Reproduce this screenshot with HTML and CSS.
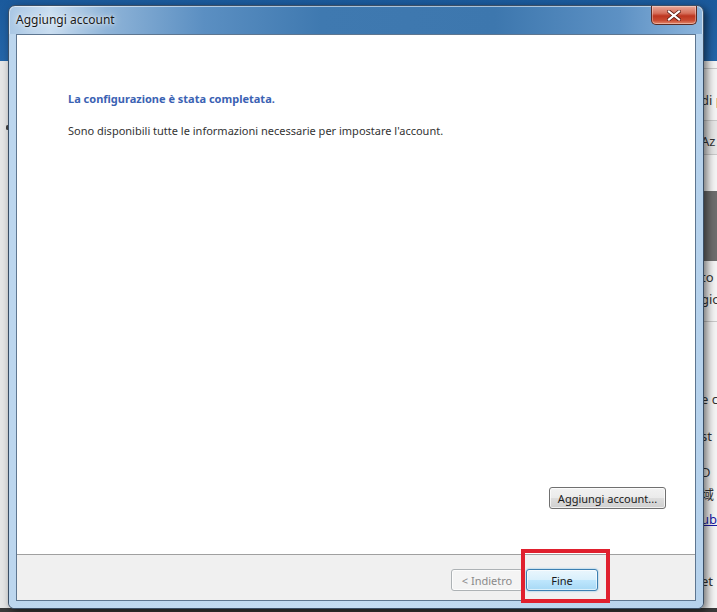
FILE: index.html
```html
<!DOCTYPE html>
<html lang="it">
<head>
    <meta charset="UTF-8">
    <title>Aggiungi account</title>
    <link rel="stylesheet" href="styles.css">
</head>
<body>

    <!-- applicazione dietro la finestra -->
    <div class="desktop">
        <div class="app-band"></div>
        <div class="app-body">
            <div class="app-left"><span class="dot"></span></div>
            <div class="app-right">
                <div class="r1">di p</div>
                <div class="r2">Az</div>
                <div class="r3">i</div>
                <div class="dark-block"></div>
                <div class="r4">to</div>
                <div class="r5">gio</div>
                <div class="row r6">e c</div>
                <div class="row r7">st</div>
                <div class="row r8">D</div>
                <div class="row r9 cjk">域</div>
                <div class="row r10 link">ub</div>
                <div class="row r11">et</div>
            </div>
        </div>
        <div class="taskbar"></div>
    </div>

    <!-- finestra di dialogo -->
    <div class="window">
        <div class="titlebar">
            <span class="title">Aggiungi account</span>
            <div class="close-btn">
                <svg width="14" height="11" viewBox="0 0 14 11">
                    <path d="M2 1.5 L12 9.5 M12 1.5 L2 9.5" stroke="#5a1a12" stroke-width="3.6" stroke-linecap="square"/>
                    <path d="M2 1.5 L12 9.5 M12 1.5 L2 9.5" stroke="#fff" stroke-width="2.2" stroke-linecap="square"/>
                </svg>
            </div>
        </div>
        <div class="client">
            <div class="content">
                <div class="heading">La configurazione è stata completata.</div>
                <div class="text">Sono disponibili tutte le informazioni necessarie per impostare l'account.</div>
                <div class="spacer"></div>
                <div class="add-row">
                    <button class="btn">Aggiungi account...</button>
                </div>
            </div>
            <div class="footer">
                <button class="btn disabled">&lt; Indietro</button>
                <button class="btn default">Fine</button>
            </div>
        </div>
    </div>

    <!-- evidenziazione rossa -->
    <div class="highlight"></div>

</body>
</html>
```

FILE: styles.css
```css
body {
    margin: 0;
    width: 717px;
    height: 612px;
    overflow: hidden;
    position: relative;
    font-family: "Noto Sans", "Liberation Sans", sans-serif;
    font-size: 12px;
}

/* applicazione sullo sfondo */
.desktop {
    width: 100%;
    height: 100%;
    display: flex;
    flex-direction: column;
    background-color: #ececec;
}

.app-band {
    height: 61px;
    background: linear-gradient(#1b5a9c, #2465a8);
    flex: none;
}

.app-body {
    flex: 1;
    display: flex;
    justify-content: space-between;
}

.app-left {
    width: 10px;
    background-color: #e6e6e6;
}

.dot {
    display: block;
    width: 3px;
    height: 5px;
    margin-top: 64px;
    margin-left: 6px;
    background-color: #444;
    border-radius: 2px;
}

.app-right {
    width: 16px;
    padding-left: 2px;
    padding-top: 7px;
    display: flex;
    flex-direction: column;
    color: #333;
    font-size: 13px;
    background-color: #f4f4f4;
    white-space: nowrap;
    overflow: hidden;
}

.r1 {
    border-top: 1px solid #c8c8c8;
    height: 51px;
    line-height: 62px;
}

.r2 {
    border-top: 1px solid #c8c8c8;
    border-bottom: 1px solid #c8c8c8;
    height: 33px;
    line-height: 40px;
    margin-left: -2px;
    padding-left: 2px;
    background-color: #e6e6e6;
}

.r3 {
    height: 36px;
    line-height: 38px;
}

.dark-block {
    height: 70px;
    margin-left: -2px;
    background-color: #6d6d6d;
}

.r4 {
    height: 28px;
    line-height: 32px;
}

.r5 {
    height: 32px;
    line-height: 20px;
    border-bottom: 1px solid #c8c8c8;
}

.row {
    height: 20px;
    line-height: 20px;
}

.r6 { margin-top: 67px; }
.r7 { margin-top: 17px; }
.r8 { margin-top: 16px; }
.r9 { margin-top: 2px; }
.r10 { margin-top: 5px; }
.r11 { margin-top: 42px; }

.cjk {
    font-family: "Noto Sans CJK SC", sans-serif;
}

.link {
    color: #1a1aa6;
    text-decoration: underline;
}

.taskbar {
    height: 4px;
    background-color: #3a3a3a;
    flex: none;
}

/* finestra */
.window {
    position: absolute;
    left: 8px;
    top: 5px;
    width: 696px;
    height: 604px;
    box-sizing: border-box;
    padding: 0 7px 7px 7px;
    border: 1px solid #3b4f66;
    border-radius: 7px 7px 6px 6px;
    background: linear-gradient(90deg, #a9c7e4 0%, #c9ddf0 6%, #8fb4d8 14%, #5b8fc2 28%, #3f79b0 45%, #3d77ae 70%, #5d91c4 88%, #8db5dc 100%);
    box-shadow: 3px 3px 8px rgba(0, 0, 0, 0.55), inset 0 0 0 1px rgba(255, 255, 255, 0.55);
    display: flex;
    flex-direction: column;
    z-index: 1;
}

.window::after {
    content: "";
    position: absolute;
    left: 0;
    right: 0;
    top: 28px;
    bottom: 0;
    border-radius: 0 0 6px 6px;
    background: linear-gradient(90deg, #bcd6ee, #c4dcf2 50%, #b6d2ec);
    z-index: 0;
}

.titlebar {
    height: 28px;
    display: flex;
    align-items: flex-start;
    justify-content: space-between;
    position: relative;
    z-index: 1;
}

.title {
    margin-top: 5px;
    color: #1a1a1a;
    font-size: 12px;
    text-shadow: 0 0 8px rgba(255, 255, 255, 0.9), 0 0 3px rgba(255, 255, 255, 0.8);
}

.close-btn {
    width: 46px;
    height: 19px;
    margin-right: -1px;
    box-sizing: border-box;
    border: 1px solid #5b2a22;
    border-top: none;
    border-radius: 0 0 5px 5px;
    background: linear-gradient(#e7a797 0%, #d6705c 40%, #bd3620 55%, #c94b32 80%, #e38a6e 100%);
    box-shadow: inset 0 0 0 1px rgba(255, 255, 255, 0.35);
    display: flex;
    justify-content: center;
    align-items: center;
}

.client {
    flex: 1;
    position: relative;
    z-index: 1;
    border: 1px solid #5e7690;
    background-color: #fff;
    display: flex;
    flex-direction: column;
}

.content {
    flex: 1;
    padding: 56px 29px 45px 51px;
    display: flex;
    flex-direction: column;
}

.heading {
    color: #3b62b3;
    font-weight: bold;
    font-size: 11px;
    line-height: 16px;
}

.text {
    margin-top: 16px;
    color: #333;
    font-size: 11px;
    line-height: 16px;
}

.spacer {
    flex: 1;
}

.add-row {
    display: flex;
    justify-content: flex-end;
}

.btn {
    height: 22px;
    padding: 0 7px;
    font-family: "Noto Sans", sans-serif;
    font-size: 11px;
    color: #1a1a1a;
    border: 1px solid #707070;
    border-radius: 3px;
    background: linear-gradient(#f2f2f2 0%, #ebebeb 48%, #dddddd 52%, #cfcfcf 100%);
    box-shadow: inset 0 0 0 1px rgba(255, 255, 255, 0.7);
}

.add-row .btn {
    width: 117px;
}

.footer {
    height: 46px;
    box-sizing: border-box;
    border-top: 1px solid #a0a0a0;
    background-color: #f0f0f0;
    padding: 14px 97px 0 0;
    display: flex;
    justify-content: flex-end;
    align-items: flex-start;
    gap: 3px;
}

.footer .btn {
    width: 72px;
}

.btn.disabled {
    color: #8a8a8a;
    border-color: #adb2b5;
    background: #f4f4f4;
}

.btn.default {
    border-color: #3c7fb1;
    background: linear-gradient(#eaf6fd 0%, #d9f0fc 48%, #bee6fd 52%, #a7d9f5 100%);
    box-shadow: inset 0 0 0 1px rgba(255, 255, 255, 0.6), 0 0 2px #6ab5e0;
}

/* rettangolo rosso */
.highlight {
    position: absolute;
    left: 521px;
    top: 549px;
    width: 81px;
    height: 46px;
    border: 4px solid #e0202e;
    z-index: 5;
}
```
